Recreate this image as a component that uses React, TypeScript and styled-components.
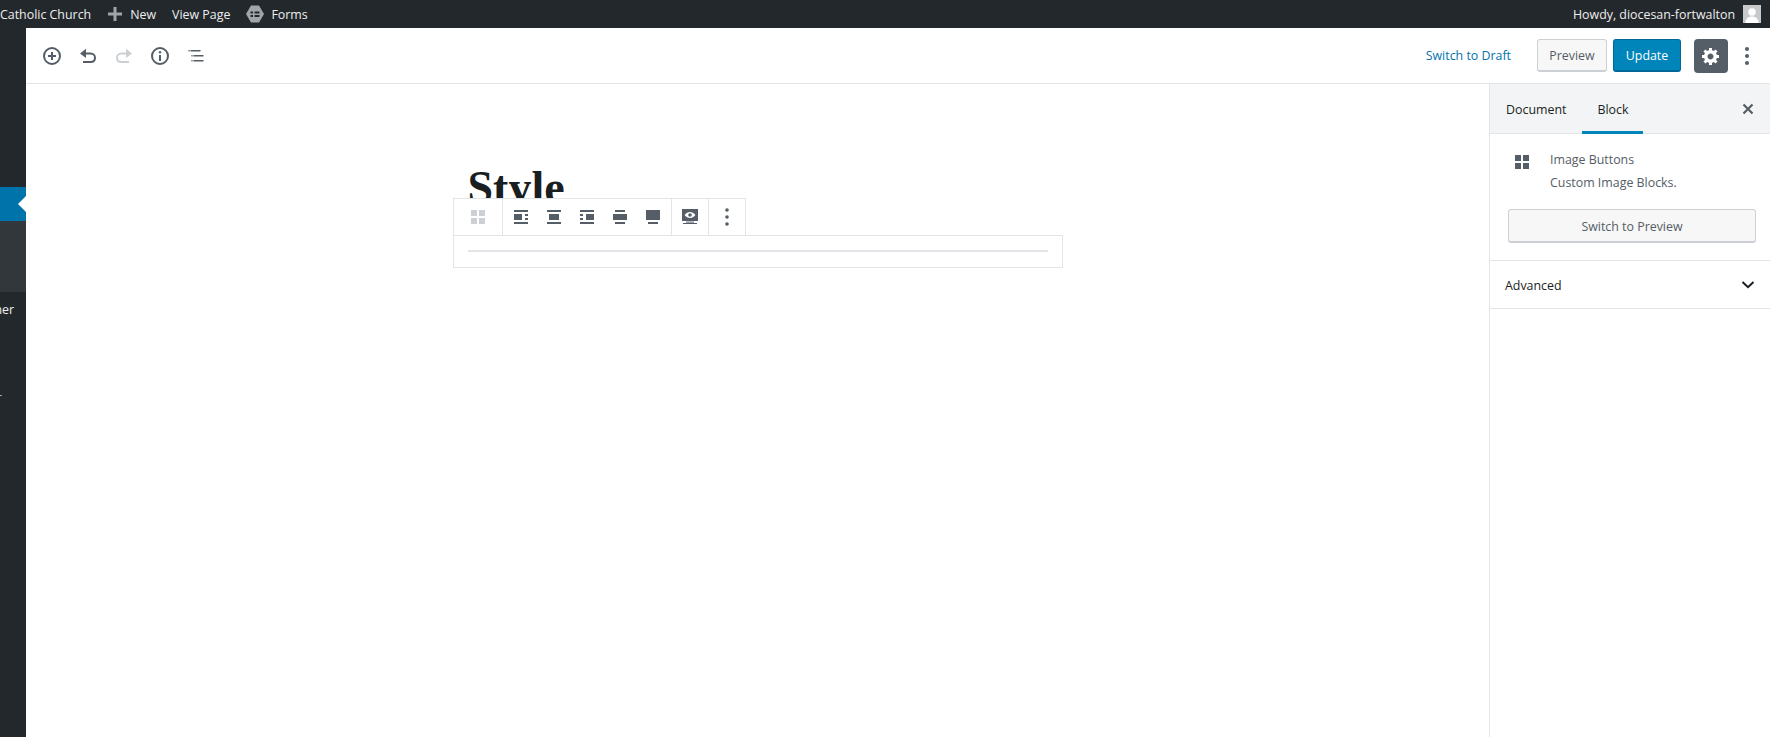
import styled, { createGlobalStyle } from "styled-components";

const GlobalStyle = createGlobalStyle`
  html, body {
    margin: 0;
    padding: 0;
    background: #fff;
    overflow: hidden;
  }
  body {
    font-family: "Open Sans", "Noto Sans", sans-serif;
    font-size: 12.4px;
    color: #555d66;
  }
  * {
    box-sizing: border-box;
  }
`;

const darkGray = "#555d66";
const borderGray = "#e2e4e7";

/*
 *  icons
 */
const ManageIcon = ({ color = darkGray }: { color?: string }) => (
  <svg width="14" height="14" viewBox="0 0 14 14" fill={color}>
    <rect width="6" height="6" />
    <rect x="8" width="6" height="6" />
    <rect y="8" width="6" height="6" />
    <rect x="8" y="8" width="6" height="6" />
  </svg>
);

const Kebab = ({ radius }: { radius: number }) => (
  <svg width="6" height="20" viewBox="0 0 6 20" fill={darkGray}>
    <circle cx="3" cy="3" r={radius} />
    <circle cx="3" cy="10" r={radius} />
    <circle cx="3" cy="17" r={radius} />
  </svg>
);

const AlignIcon = ({ rects }: { rects: number[][] }) => (
  <svg width="14" height="14" viewBox="0 0 14 14" fill={darkGray}>
    {rects.map(([x, y, w, h]) => (
      <rect key={`${x}-${y}`} x={x} y={y} width={w} height={h} />
    ))}
  </svg>
);

const alignLeft = [[0, 0, 14, 2], [0, 4, 8, 6], [11, 4, 3, 2], [11, 8, 3, 2], [0, 12, 14, 2]];
const alignCenter = [[0, 0, 14, 2], [2, 4, 10, 6], [0, 12, 14, 2]];
const alignRight = [[0, 0, 14, 2], [0, 4, 3, 2], [0, 8, 3, 2], [6, 4, 8, 6], [0, 12, 14, 2]];
const alignWide = [[2, 0, 10, 2], [0, 4, 14, 6], [2, 12, 10, 2]];
const alignFull = [[0, 0, 14, 10], [2, 12, 10, 2]];

const PreviewIcon = () => (
  <svg width="16" height="16" viewBox="0 0 16 16">
    <rect width="16" height="12" fill={darkGray} />
    <path d="M2.6 6C4 3.9 6 3 8 3s4 .9 5.4 3C12 8.1 10 9 8 9S4 8.1 2.6 6z" fill="#fff" />
    <circle cx="8" cy="6" r="1.8" fill={darkGray} />
    <rect x="4" y="12.6" width="8" height="1" fill={darkGray} />
    <rect x="1" y="14" width="14" height="1" fill={darkGray} />
  </svg>
);

const InserterIcon = () => (
  <svg width="20" height="20" viewBox="0 0 20 20" fill="none" stroke={darkGray}>
    <circle cx="10" cy="10" r="8" strokeWidth="2" />
    <path d="M10 6v8M6 10h8" strokeWidth="2" />
  </svg>
);

const UndoIcon = ({ color, flip }: { color: string; flip?: boolean }) => (
  <svg
    width="20"
    height="20"
    viewBox="0 0 20 20"
    fill="none"
    style={flip ? { transform: "scaleX(-1)" } : undefined}
  >
    <path d="M8 2.800L2 7.500 8 12z" fill={color} />
    <path
      d="M6 7.500h6.500c2.700 0 4.500 1.900 4.500 4.300s-1.800 4.200-4.500 4.200H5"
      stroke={color}
      strokeWidth="2"
    />
  </svg>
);

const InfoIcon = () => (
  <svg width="20" height="20" viewBox="0 0 20 20" fill="none" stroke={darkGray}>
    <circle cx="10" cy="10" r="8" strokeWidth="2" />
    <path d="M10 9v6" strokeWidth="2" />
    <circle cx="10" cy="6.200" r="1.200" fill={darkGray} stroke="none" />
  </svg>
);

const ListIcon = () => (
  <svg width="20" height="20" viewBox="0 0 20 20" fill={darkGray}>
    <rect x="2" y="4" width="2" height="1.500" opacity="0.6" />
    <rect x="4.500" y="4" width="10" height="1.500" />
    <rect x="5" y="9" width="2" height="1.500" opacity="0.6" />
    <rect x="7.500" y="9" width="10" height="1.500" />
    <rect x="5" y="14" width="2" height="1.500" opacity="0.6" />
    <rect x="7.500" y="14" width="10" height="1.500" />
  </svg>
);

const GearIcon = () => (
  <svg width="20" height="20" viewBox="0 0 20 20" fill="#fff">
    <path d="M18 12h-2.18c-.17.7-.44 1.35-.81 1.93l1.54 1.54-2.1 2.1-1.54-1.54c-.58.36-1.23.63-1.91.79V19H8v-2.18c-.68-.16-1.33-.43-1.91-.79l-1.54 1.54-2.12-2.12 1.54-1.54c-.36-.58-.63-1.23-.79-1.91H1V9.03h2.17c.16-.7.44-1.35.8-1.94L2.43 5.55l2.1-2.1 1.54 1.54c.58-.37 1.24-.64 1.93-.81V2h3v2.18c.68.16 1.33.43 1.91.79l1.54-1.54 2.12 2.12-1.54 1.54c.36.59.64 1.24.8 1.94H18V12zm-8.5 1.5c1.66 0 3-1.34 3-3s-1.34-3-3-3-3 1.34-3 3 1.34 3 3 3z" />
  </svg>
);

const CloseIcon = () => (
  <svg width="14" height="14" viewBox="0 0 14 14" fill="none" stroke={darkGray} strokeWidth="2.2">
    <path d="M2.500 2.500l9 9M11.500 2.500l-9 9" />
  </svg>
);

const ChevronIcon = () => (
  <svg width="14" height="10" viewBox="0 0 14 10" fill="none" stroke="#191e23" strokeWidth="2">
    <path d="M1.500 2l5.500 5.200L12.500 2" />
  </svg>
);

const PlusIcon = () => (
  <svg width="14" height="14" viewBox="0 0 14 14" fill="#a0a5aa">
    <path d="M5.500 0h3v5.500H14v3H8.500V14h-3V8.500H0v-3h5.500z" />
  </svg>
);

const FormsIcon = () => (
  <svg width="18" height="20" viewBox="0 0 18 20">
    <path d="M5 1.500h8l5 8.500-5 8.500H5L0 10z" fill="#a0a5aa" />
    <path d="M4.500 7.500h2.500v2H4.500zM8.500 7.500h5v2h-5zM4.500 11h2.500v2H4.500zM8.500 11h5v2h-5z" fill="#23282d" />
  </svg>
);

const AvatarIcon = () => (
  <svg width="18" height="18" viewBox="0 0 18 18">
    <rect width="18" height="18" fill="#c7c9cb" />
    <circle cx="9" cy="7" r="3.800" fill="#fff" />
    <path d="M2.500 18c0-4.500 3-6.500 6.500-6.500s6.500 2 6.500 6.500z" fill="#fff" />
  </svg>
);

const App = () => (
  <Page>
    <GlobalStyle />
    <AdminBar>
      <AdminGroup>
        <SiteName>Catholic Church</SiteName>
        <AdminItem>
          <PlusIcon />
          New
        </AdminItem>
        <AdminItem>View Page</AdminItem>
        <AdminItem $gap={7}>
          <FormsIcon />
          Forms
        </AdminItem>
      </AdminGroup>
      <AdminItem>
        Howdy, diocesan-fortwalton
        <AvatarIcon />
      </AdminItem>
    </AdminBar>

    <Workspace>
      <SideMenu>
        <CurrentItem />
        <Submenu />
        <MenuLabel>Banner</MenuLabel>
        <MenuDot />
      </SideMenu>

      <Editor>
        <Header>
          <HeaderTools>
            <ToolButton><InserterIcon /></ToolButton>
            <ToolButton><UndoIcon color={darkGray} /></ToolButton>
            <ToolButton><UndoIcon color="#ccd0d4" flip /></ToolButton>
            <ToolButton><InfoIcon /></ToolButton>
            <ToolButton><ListIcon /></ToolButton>
          </HeaderTools>
          <HeaderActions>
            <LinkButton>Switch to Draft</LinkButton>
            <SecondaryButton>Preview</SecondaryButton>
            <PrimaryButton>Update</PrimaryButton>
            <SettingsButton><GearIcon /></SettingsButton>
            <KebabButton><Kebab radius={2} /></KebabButton>
          </HeaderActions>
        </Header>

        <EditorBody>
          <Canvas>
            <Column>
              <PostTitle>Style</PostTitle>
              <BlockCard>
                <BlockToolbar>
                  <ToolbarGroup>
                    <ToolbarSlot $width={48}><ManageIcon color="#ccd0d4" /></ToolbarSlot>
                  </ToolbarGroup>
                  <AlignGroup>
                    <AlignSlot $width={33}><AlignIcon rects={alignLeft} /></AlignSlot>
                    <AlignSlot $width={33}><AlignIcon rects={alignCenter} /></AlignSlot>
                    <AlignSlot $width={33}><AlignIcon rects={alignRight} /></AlignSlot>
                    <AlignSlot $width={33}><AlignIcon rects={alignWide} /></AlignSlot>
                    <AlignSlot $width={33}><AlignIcon rects={alignFull} /></AlignSlot>
                  </AlignGroup>
                  <ToolbarGroup>
                    <ToolbarSlot $width={36}><PreviewIcon /></ToolbarSlot>
                  </ToolbarGroup>
                  <ToolbarGroup>
                    <ToolbarSlot $width={36}><Kebab radius={1.8} /></ToolbarSlot>
                  </ToolbarGroup>
                </BlockToolbar>
                <BlockRule />
              </BlockCard>
            </Column>
          </Canvas>

          <Panel>
            <PanelTabs>
              <PanelTab>Document</PanelTab>
              <PanelTab $active>Block</PanelTab>
              <PanelClose><CloseIcon /></PanelClose>
            </PanelTabs>
            <BlockInfo>
              <BlockSummary>
                <BlockIconSlot><ManageIcon /></BlockIconSlot>
                <div>
                  <BlockName>Image Buttons</BlockName>
                  <BlockDescription>Custom Image Blocks.</BlockDescription>
                </div>
              </BlockSummary>
              <WideButton>Switch to Preview</WideButton>
            </BlockInfo>
            <AdvancedRow>
              Advanced
              <ChevronIcon />
            </AdvancedRow>
          </Panel>
        </EditorBody>
      </Editor>
    </Workspace>
  </Page>
);

const Page = styled.div`
  display: flex;
  flex-direction: column;
  height: 737px;
  overflow: hidden;
`;

/*
 *  admin bar
 */
const AdminBar = styled.div`
  display: flex;
  flex: none;
  align-items: center;
  justify-content: space-between;
  height: 28px;
  padding-right: 9px;
  background: #23282d;
  color: #eee;
`;

const AdminGroup = styled.div`
  display: flex;
  align-items: center;
  gap: 16px;
`;

const AdminItem = styled.div<{ $gap?: number }>`
  display: flex;
  align-items: center;
  gap: ${({ $gap = 8 }) => $gap}px;
  white-space: nowrap;
`;

const SiteName = styled(AdminItem)`
  margin-right: 1px;
`;

/*
 *  side menu
 */
const Workspace = styled.div`
  display: flex;
  flex: 1;
  min-height: 0;
`;

const SideMenu = styled.div`
  flex: none;
  width: 26px;
  padding-top: 159px;
  background: #23282d;
  overflow: hidden;
`;

const CurrentItem = styled.div`
  position: relative;
  height: 34px;
  background: #0073aa;

  &::after {
    content: "";
    position: absolute;
    top: 9px;
    right: 0;
    border: 8px solid transparent;
    border-left-width: 0;
    border-right-color: #fff;
  }
`;

const Submenu = styled.div`
  height: 71px;
  background: #32373c;
`;

const MenuLabel = styled.div`
  display: flex;
  justify-content: flex-end;
  height: 18px;
  margin-top: 9px;
  padding-right: 12px;
  color: #eee;
  white-space: nowrap;
`;

const MenuDot = styled.div`
  width: 2px;
  height: 1px;
  margin-top: 76px;
  background: #9ea3a8;
`;

/*
 *  header
 */
const Editor = styled.div`
  display: flex;
  flex: 1;
  flex-direction: column;
  min-width: 0;
`;

const Header = styled.div`
  display: flex;
  flex: none;
  align-items: center;
  justify-content: space-between;
  height: 56px;
  padding: 0 13px 0 8px;
  border-bottom: 1px solid ${borderGray};
`;

const HeaderTools = styled.div`
  display: flex;
`;

const ToolButton = styled.div`
  display: flex;
  align-items: center;
  justify-content: center;
  width: 36px;
  height: 36px;
`;

const HeaderActions = styled.div`
  display: flex;
  align-items: center;
`;

const LinkButton = styled.div`
  margin-right: 26px;
  color: #0073aa;
`;

const SecondaryButton = styled.div`
  display: flex;
  align-items: center;
  justify-content: center;
  width: 70px;
  height: 33px;
  margin-right: 6px;
  border: 1px solid #ccd0d4;
  border-bottom-width: 2px;
  border-radius: 3px;
  background: #f7f7f7;
`;

const PrimaryButton = styled.div`
  display: flex;
  align-items: center;
  justify-content: center;
  width: 68px;
  height: 33px;
  margin-right: 13px;
  border: 1px solid #006799;
  border-bottom-width: 2px;
  border-radius: 3px;
  background: #0085ba;
  color: #fff;
`;

const SettingsButton = styled.div`
  display: flex;
  align-items: center;
  justify-content: center;
  width: 34px;
  height: 34px;
  margin-right: 16px;
  border-radius: 4px;
  background: ${darkGray};
`;

const KebabButton = styled.div`
  display: flex;
  width: 6px;
  margin-right: 7px;
`;

/*
 *  canvas
 */
const EditorBody = styled.div`
  display: flex;
  flex: 1;
  min-height: 0;
`;

const Canvas = styled.div`
  display: flex;
  flex: 1;
  justify-content: center;
  min-width: 0;
`;

const Column = styled.div`
  width: 610px;
  padding-top: 78px;
`;

const PostTitle = styled.h1`
  height: 73px;
  margin: 0;
  padding-left: 15px;
  color: #191e23;
  font-family: "Liberation Serif", serif;
  font-size: 46px;
  font-weight: 700;
  line-height: 52px;
`;

const BlockCard = styled.div`
  position: relative;
  height: 33px;
  padding: 14px 14px 0;
  border: 1px solid ${borderGray};
`;

const BlockToolbar = styled.div`
  position: absolute;
  top: -38px;
  left: -1px;
  display: flex;
  height: 38px;
  border: 1px solid ${borderGray};
  border-right: 0;
  background: #fff;
`;

const ToolbarGroup = styled.div`
  display: flex;
  border-right: 1px solid ${borderGray};
`;

const AlignGroup = styled(ToolbarGroup)`
  padding: 0 1px 0 2px;
`;

const ToolbarSlot = styled.div<{ $width: number }>`
  display: flex;
  align-items: center;
  justify-content: center;
  width: ${({ $width }) => $width}px;
`;

const AlignSlot = styled(ToolbarSlot)`
  padding-right: 1px;
`;

const BlockRule = styled.div`
  height: 2px;
  background: ${borderGray};
`;

/*
 *  settings panel
 */
const Panel = styled.div`
  flex: none;
  width: 281px;
  border-left: 1px solid ${borderGray};
  color: ${darkGray};
`;

const PanelTabs = styled.div`
  display: flex;
  align-items: stretch;
  height: 50px;
  padding-left: 4px;
  border-bottom: 1px solid ${borderGray};
  background: #f3f4f5;
`;

const PanelTab = styled.div<{ $active?: boolean }>`
  display: flex;
  align-items: center;
  height: 50px;
  margin-right: 4px;
  padding: 3px ${({ $active }) => ($active ? 15 : 12)}px 0;
  border-bottom: 3px solid ${({ $active }) => ($active ? "#0085ba" : "transparent")};
  color: #191e23;
  font-weight: ${({ $active }) => ($active ? 500 : 400)};
`;

const PanelClose = styled.div`
  display: flex;
  align-items: center;
  margin-left: auto;
  padding-right: 15px;
`;

const BlockInfo = styled.div`
  height: 127px;
  padding: 15px 14px 0 18px;
  border-bottom: 1px solid ${borderGray};
`;

const BlockSummary = styled.div`
  display: flex;
`;

const BlockIconSlot = styled.div`
  flex: none;
  width: 42px;
  padding: 6px 0 0 7px;
`;

const BlockName = styled.div`
  height: 22px;
  line-height: 22px;
  font-weight: 500;
`;

const BlockDescription = styled.div`
  height: 23px;
  padding-top: 1px;
  line-height: 22px;
`;

const WideButton = styled.div`
  display: flex;
  align-items: center;
  justify-content: center;
  height: 34px;
  margin-top: 15px;
  padding-top: 1px;
  border: 1px solid #ccd0d4;
  border-bottom-width: 2px;
  border-radius: 3px;
  background: #f7f7f7;
`;

const AdvancedRow = styled.div`
  display: flex;
  align-items: center;
  justify-content: space-between;
  height: 48px;
  padding: 1px 15px 0;
  border-bottom: 1px solid ${borderGray};
  color: #191e23;
  font-weight: 500;
`;

export default App;
